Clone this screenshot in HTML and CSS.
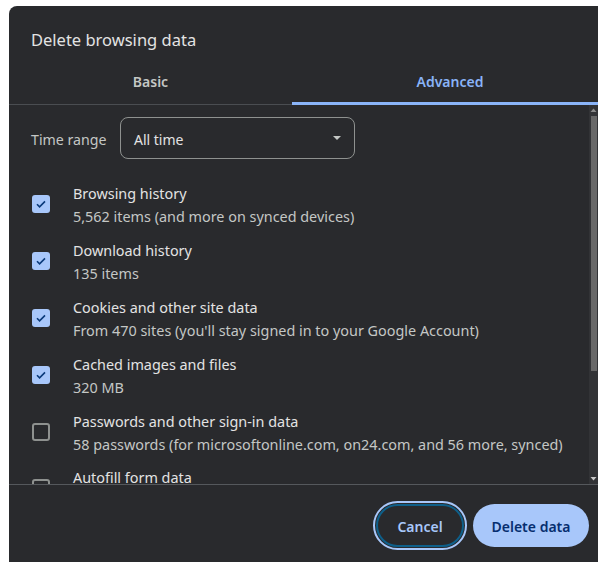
FILE: index.html
```html
<!DOCTYPE html>
<html lang="en">
<head>
<meta charset="utf-8">
<title>Delete browsing data</title>
<link rel="stylesheet" href="styles.css">
</head>
<body>
<div class="dialog">
  <h1 class="title">Delete browsing data</h1>

  <div class="tabs">
    <div class="tab">Basic</div>
    <div class="tab active">Advanced</div>
  </div>

  <div class="body">
    <div class="scroll">
      <div class="range-row">
        <span class="range-label">Time range</span>
        <div class="select">
          <span class="select-value">All time</span>
          <svg class="caret" width="8" height="4" viewBox="0 0 8 4"><path d="M0 0h8L4 4z" fill="#c4c7c5"/></svg>
        </div>
      </div>

      <ul class="options">
        <li class="option">
          <span class="checkbox checked"><svg width="12" height="10" viewBox="0 0 12 10"><path d="M2 5.2l2.6 2.6L10 2.4" fill="none" stroke="#0a3a7a" stroke-width="1.6"/></svg></span>
          <div class="text">
            <div class="name">Browsing history</div>
            <div class="desc">5,562 items (and more on synced devices)</div>
          </div>
        </li>
        <li class="option">
          <span class="checkbox checked"><svg width="12" height="10" viewBox="0 0 12 10"><path d="M2 5.2l2.6 2.6L10 2.4" fill="none" stroke="#0a3a7a" stroke-width="1.6"/></svg></span>
          <div class="text">
            <div class="name">Download history</div>
            <div class="desc">135 items</div>
          </div>
        </li>
        <li class="option">
          <span class="checkbox checked"><svg width="12" height="10" viewBox="0 0 12 10"><path d="M2 5.2l2.6 2.6L10 2.4" fill="none" stroke="#0a3a7a" stroke-width="1.6"/></svg></span>
          <div class="text">
            <div class="name">Cookies and other site data</div>
            <div class="desc">From 470 sites (you'll stay signed in to your Google Account)</div>
          </div>
        </li>
        <li class="option">
          <span class="checkbox checked"><svg width="12" height="10" viewBox="0 0 12 10"><path d="M2 5.2l2.6 2.6L10 2.4" fill="none" stroke="#0a3a7a" stroke-width="1.6"/></svg></span>
          <div class="text">
            <div class="name">Cached images and files</div>
            <div class="desc">320 MB</div>
          </div>
        </li>
        <li class="option">
          <span class="checkbox"></span>
          <div class="text">
            <div class="name">Passwords and other sign-in data</div>
            <div class="desc">58 passwords (for microsoftonline.com, on24.com, and 56 more, synced)</div>
          </div>
        </li>
        <li class="option">
          <span class="checkbox"></span>
          <div class="text">
            <div class="name">Autofill form data</div>
          </div>
        </li>
      </ul>
    </div>

    <div class="scrollbar">
      <svg class="arrow" width="9" height="10" viewBox="0 0 9 10"><path d="M1.5 7h6L4.5 3.5z" fill="#8a8a8a"/></svg>
      <div class="thumb"></div>
      <div class="track-rest"></div>
      <svg class="arrow" width="9" height="10" viewBox="0 0 9 10"><path d="M1.5 3h6L4.5 6.5z" fill="#c8c8c8"/></svg>
    </div>
  </div>

  <div class="footer">
    <button class="btn cancel">Cancel</button>
    <button class="btn primary">Delete data</button>
  </div>
</div>
</body>
</html>
```

FILE: styles.css
```css
html, body {
  margin: 0;
  padding: 0;
  background: #ffffff;
  overflow: hidden;
}

body {
  font-family: "Noto Sans", "Open Sans", sans-serif;
  font-size: 14px;
  color: #e3e3e3;
}

.dialog {
  margin: 6px 0 0 9px;
  width: 589px;
  height: 556px;
  background: #292a2d;
  border-radius: 8px 0 0 0;
  display: flex;
  flex-direction: column;
  overflow: hidden;
}

.title {
  margin: 22px 0 7px 22px;
  font-size: 16.5px;
  font-weight: 400;
  line-height: 24px;
  color: #e3e3e3;
}

/* tab strip */
.tabs {
  display: grid;
  grid-template-columns: 283px 1fr;
  height: 46px;
}

.tab {
  display: flex;
  align-items: center;
  justify-content: center;
  font-weight: 600;
  color: #c4c7c5;
  border-bottom: 1px solid #4a4d51;
  box-sizing: border-box;
}

.tab.active {
  color: #8ab4f8;
  border-bottom: 3px solid #8ab4f8;
  padding: 2px 0 0 10px;
}

/* scrolling list + scrollbar */
.body {
  display: flex;
  height: 379px;
  border-bottom: 1px solid #55585c;
}

.scroll {
  flex: 1;
  overflow: hidden;
  padding: 12px 0 0 22px;
}

.range-row {
  display: flex;
  align-items: center;
}

.range-label {
  width: 89px;
  padding-top: 3px;
  color: #c4c7c5;
  font-size: 14.2px;
}

.select {
  width: 235px;
  height: 42px;
  box-sizing: border-box;
  border: 1px solid #8e918f;
  border-radius: 8px;
  display: flex;
  align-items: center;
  justify-content: space-between;
  padding: 0 13px 0 13px;
  color: #e3e3e3;
}

.select-value {
  padding-top: 3px;
}

.options {
  list-style: none;
  margin: 16px 0 0;
  padding: 0;
}

.option {
  display: flex;
  align-items: flex-start;
  gap: 23px;
  padding: 7px 0 5px;
  font-size: 14.4px;
}

.option:nth-child(n+5) {
  margin-top: -0.5px;
}

.checkbox {
  flex: none;
  width: 18px;
  height: 18px;
  margin: 13px 0 0 1px;
  box-sizing: border-box;
  border: 2px solid #8e918f;
  border-radius: 3px;
  display: flex;
  align-items: center;
  justify-content: center;
}

.checkbox.checked {
  border: none;
  background: #a8c7fa;
}

.text {
  display: flex;
  flex-direction: column;
  gap: 3px;
  padding-top: 2px;
}

.name {
  line-height: 20px;
  color: #e3e3e3;
  white-space: nowrap;
}

.desc {
  line-height: 20px;
  color: #c4c7c5;
  white-space: nowrap;
}

.scrollbar {
  flex: none;
  width: 9px;
  background: #323336;
  display: flex;
  flex-direction: column;
}

.arrow {
  flex: none;
  display: block;
}

.thumb {
  flex: none;
  height: 255px;
  margin: 1px 1px 0 2px;
  background: #686868;
}

.track-rest {
  flex: 1;
}

/* footer buttons */
.footer {
  flex: 1;
  display: flex;
  justify-content: flex-end;
  align-items: flex-start;
  gap: 9px;
  padding: 19px 9px 0 0;
}

.btn {
  font-family: inherit;
  font-size: 14px;
  font-weight: 600;
  height: 43px;
  padding-top: 2px;
  border-radius: 22px;
  cursor: pointer;
}

.cancel {
  width: 88px;
  background: transparent;
  color: #a8c7fa;
  border: 2px solid #0d5f8a;
  outline: 2px solid #a8c7fa;
  outline-offset: 1px;
}

.primary {
  width: 116px;
  background: #a8c7fa;
  color: #062e6f;
  border: none;
}
```
